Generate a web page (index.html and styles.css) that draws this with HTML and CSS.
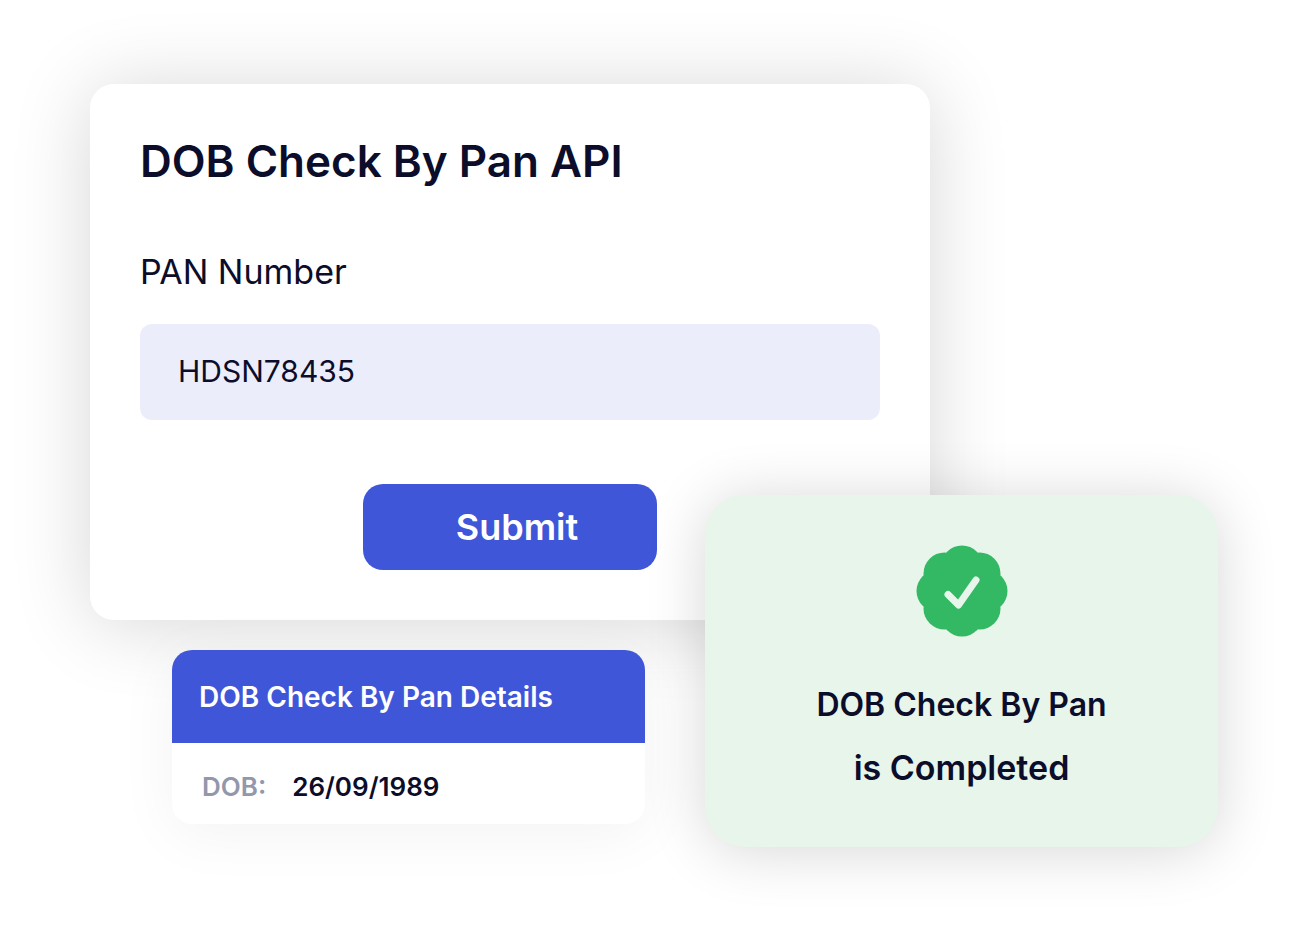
FILE: index.html
```html
<!DOCTYPE html>
<html lang="en">
<head>
    <meta charset="UTF-8">
    <meta name="viewport" content="width=device-width, initial-scale=1.0">
    <title>DOB Check By Pan API</title>
    <link rel="stylesheet" href="styles.css">
</head>
<body>
    <main class="demo">
        <form class="form-card">
            <h1>DOB Check By Pan API</h1>
            <label for="pan">PAN Number</label>
            <input type="text" id="pan" value="HDSN78435">
            <button type="button" class="submit-btn">Submit</button>
        </form>

        <section class="details">
            <h2>DOB Check By Pan Details</h2>
            <dl>
                <dt>DOB:</dt>
                <dd>26/09/1989</dd>
            </dl>
        </section>

        <section class="status-card">
            <svg class="badge" viewBox="0 0 92 92" aria-hidden="true">
                <g fill="#33b964">
                    <circle cx="46" cy="46" r="30"/>
                    <circle cx="46" cy="21.500" r="21"/>
                    <circle cx="46" cy="70.500" r="21"/>
                    <circle cx="21.500" cy="46" r="21"/>
                    <circle cx="70.500" cy="46" r="21"/>
                    <circle cx="28.500" cy="28.500" r="21"/>
                    <circle cx="63.500" cy="28.500" r="21"/>
                    <circle cx="28.500" cy="63.500" r="21"/>
                    <circle cx="63.500" cy="63.500" r="21"/>
                </g>
                <path d="M32 49.500L42.500 60L60 35" fill="none" stroke="#e7f5ea" stroke-width="7" stroke-linecap="round" stroke-linejoin="round"/>
            </svg>
            <p>DOB Check By Pan</p>
            <p class="result">is Completed</p>
        </section>
    </main>
</body>
</html>
```
FILE: styles.css
```css
* {
    box-sizing: border-box;
}
body {
    margin: 0;
    background: #fff;
    color: #0b0d2a;
    font-family: Inter, sans-serif;
}
h1, h2, p, dl, dd {
    margin: 0;
}
.demo {
    position: relative;
    max-width: 1308px;
    margin: 0 auto;
    padding: 84px 90px;
}
.form-card {
    display: flex;
    flex-direction: column;
    max-width: 840px;
    padding: 50px;
    background: #fff;
    border-radius: 24px;
    box-shadow: 0 4px 80px rgba(0, 0, 0, 0.16);
}
.form-card h1 {
    margin-bottom: 64px;
    font-size: 44px;
    font-weight: 600;
    line-height: 54px;
}
.form-card label {
    margin-bottom: 32px;
    font-size: 34px;
    line-height: 40px;
}
.form-card input {
    width: 100%;
    height: 96px;
    margin-bottom: 64px;
    padding: 0 38px 2px;
    border: none;
    border-radius: 12px;
    background: #ecedfb;
    color: inherit;
    font-family: inherit;
    font-size: 30px;
}
.submit-btn {
    align-self: center;
    padding: 20px 79px 20px 93px;
    border: none;
    border-radius: 20px;
    background: #3f56d8;
    color: #fff;
    font-family: inherit;
    font-size: 36px;
    font-weight: 600;
    line-height: 46px;
    cursor: pointer;
}
.details {
    max-width: 473px;
    margin: 30px 0 0 82px;
    background: #fff;
    border-radius: 20px;
    box-shadow: 0 10px 60px rgba(0, 0, 0, 0.05);
}
.details h2 {
    padding: 27px 27px 26px;
    border-radius: 20px 20px 0 0;
    background: #3f56d8;
    color: #fff;
    font-size: 28px;
    font-weight: 600;
    line-height: 40px;
}
.details dl {
    display: flex;
    gap: 26px;
    padding: 24px 30px 17px;
    font-size: 26px;
    font-weight: 600;
    line-height: 40px;
}
.details dt {
    color: #9297ab;
}
.status-card {
    position: absolute;
    top: 495px;
    right: 90px;
    width: 513px;
    padding: 50px 20px 48px;
    border-radius: 40px;
    background: #e7f5ea;
    box-shadow: 0 4px 60px rgba(0, 0, 0, 0.16);
    font-size: 32px;
    font-weight: 600;
    line-height: 63px;
    text-align: center;
}
.badge {
    display: block;
    width: 92px;
    height: 92px;
    margin: 0 auto 36px;
}
.status-card .result {
    font-size: 34px;
}
```
